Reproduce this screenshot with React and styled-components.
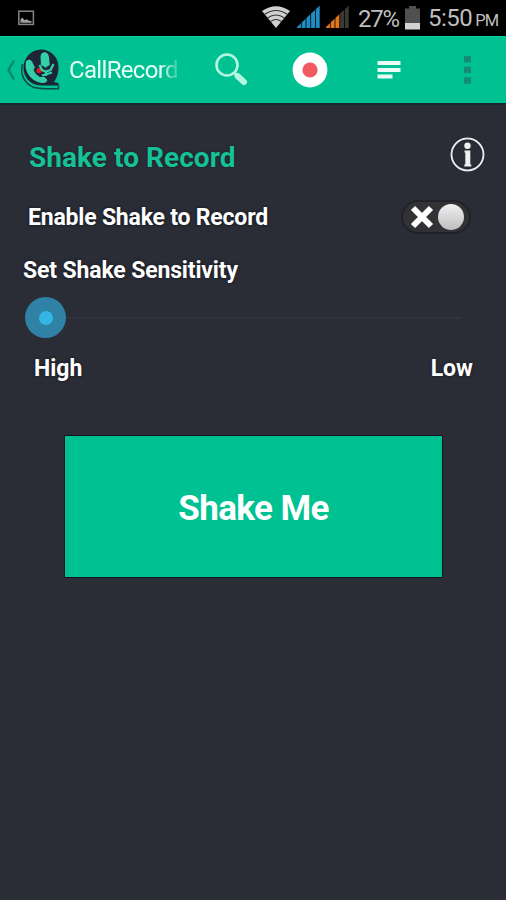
import React, { useState } from 'react';
import styled, { createGlobalStyle } from 'styled-components';

const GlobalStyle = createGlobalStyle`
  * { box-sizing: border-box; }
  body {
    margin: 0;
    background: #2a2d36;
    font-family: Roboto, "Liberation Sans", sans-serif;
  }
  button { font-family: inherit; border: 0; padding: 0; background: none; cursor: pointer; }
  svg { display: block; flex: none; }
`;

const Screen = styled.div`
  width: 506px;
  height: 900px;
  overflow: hidden;
  background: #2a2d36;
  color: #fff;
`;
const StatusBar = styled.div`
  height: 36px;
  display: flex;
  align-items: center;
  padding: 0 8px 0 17px;
  background: #000;
  color: #bebebe;
`;
const StatusIcons = styled.div`
  margin-left: auto;
  display: flex;
  align-items: center;
`;
const Signals = styled.div`
  display: flex;
  gap: 5px;
  padding: 0 0 3px 7px;
`;
const Percent = styled.span`
  width: 55px;
  padding: 2px 0 0 8px;
  font-size: 24px;
  line-height: 34px;
  letter-spacing: -1.3px;
  white-space: nowrap;
`;
const Clock = styled.span`
  width: 78px;
  padding: 2px 0 0 8px;
  font-size: 24px;
  line-height: 34px;
  letter-spacing: -0.5px;
  white-space: nowrap;
`;
const Meridiem = styled.small`
  margin-left: 3px;
  font-size: 16.5px;
  letter-spacing: -0.9px;
`;
const ActionBar = styled.header`
  height: 69px;
  display: flex;
  align-items: center;
  background: #00c191;
  border-top: 1px solid #10cf9f;
  border-bottom: 2px solid #16282f;
`;
const UpButton = styled.button`
  display: flex;
  align-items: center;
  padding-left: 5px;
`;
const AppTitle = styled.h1`
  width: 111px;
  margin: 0 0 0 9px;
  font-size: 24px;
  font-weight: 400;
  line-height: 32px;
  letter-spacing: -0.68px;
  white-space: nowrap;
  color: #e6fff8;
  mask-image: linear-gradient(to right, #000 84%, rgba(0, 0, 0, 0.2) 100%);
`;
const Actions = styled.nav`
  flex: 1;
  display: flex;
  padding-left: 14px;
`;
const Action = styled.button`
  width: 79px;
  height: 66px;
  display: grid;
  place-items: center;
`;
const Content = styled.main`
  padding: 27px 20px 0 23px;
`;
const Row = styled.div`
  display: flex;
  align-items: center;
  justify-content: space-between;
  height: ${props => props.$height}px;
  padding: ${props => props.$padding || '0'};
`;
const Heading = styled.h2`
  margin: 0;
  font-size: 28px;
  font-weight: 700;
  letter-spacing: 0.05px;
  color: #14c296;
  text-shadow: 0 0 2px #1a1626;
`;
const InfoButton = styled.button`
  padding-bottom: 5px;
`;
const Label = styled.span`
  font-size: 23px;
  font-weight: 700;
  letter-spacing: ${props => props.$spacing || 0}px;
  white-space: nowrap;
  text-shadow: 0 0 3px #101018;
`;
const Switch = styled.button`
  width: 70px;
  height: 34px;
  display: flex;
  align-items: center;
  justify-content: space-between;
  flex-direction: ${props => (props.$on ? 'row-reverse' : 'row')};
  padding: 0 5px 0 7px;
  border: 2px solid #20222a;
  border-radius: 17px;
  background: #323236;
`;
const Knob = styled.span`
  width: 26px;
  height: 26px;
  border-radius: 50%;
  background: linear-gradient(#f0f0f0, #bdbdbd);
`;
const Slider = styled.div`
  display: flex;
  align-items: center;
  height: 56px;
  padding: 1px 25px 0 2px;
`;
const Thumb = styled.div`
  width: 41px;
  height: 41px;
  display: grid;
  place-items: center;
  border-radius: 50%;
  background: #2f81a5;
  &::after {
    content: '';
    width: 14px;
    height: 14px;
    border-radius: 50%;
    background: #33b5e5;
  }
`;
const Track = styled.div`
  flex: 1;
  height: 2px;
  background: #31343d;
`;
const ShakeButton = styled.button`
  display: block;
  width: 377px;
  height: 141px;
  margin: 44px 0 0 42px;
  padding: 3px 0 0;
  background: #00c191;
  box-shadow: 0 0 0 1px #171426;
  color: #fff;
  font-size: 35px;
  font-weight: 700;
  letter-spacing: -0.6px;
`;

const ScreenshotIcon = () => (
  <svg width="18" height="16" viewBox="0 0 18 16">
    <rect x="1.8" y="1.2" width="14.6" height="13.2" fill="none" stroke="#858585" strokeWidth="1.5" />
    <path d="M3.5 12.8V9l2-1.2 2 2.4 2-.9 2 1.2 3 .8v1.5z" fill="#a0a0a0" />
  </svg>
);

const WifiIcon = () => (
  <svg width="28" height="24" viewBox="0 0 28 24">
    <path d="M0 5Q14-4.500 28 5L14 22Z" fill="#d0d0d0" />
    <g fill="none" stroke="#333" strokeWidth="1.1">
      <path d="M2.500 8.500Q14 .5 25.500 8.500M5.500 12Q14 6 22.500 12M8.500 15.500Q14 11.500 19.500 15.500" />
    </g>
  </svg>
);

const SignalIcon = ({ bars, color }) => (
  <svg width="24" height="23" viewBox="0 0 24 23">
    {[0, 1, 2, 3, 4].map(i => {
      const x = i * 4.7;
      return (
        <path
          key={i}
          d={`M${x} 23V${22 - x * 0.95}L${x + 3.9} ${22 - (x + 3.9) * 0.95}V23z`}
          fill={i < bars ? color : '#3b3936'}
        />
      );
    })}
  </svg>
);

const BatteryIcon = () => (
  <svg width="15" height="24" viewBox="0 0 15 24">
    <path d="M4 0h7v2.500h4V17H0V2.500h4z" fill="#505050" />
    <path d="M0 17h15v6.500H0z" fill="#d2d2d2" />
  </svg>
);

const BackIcon = () => (
  <svg width="15" height="24" viewBox="0 0 15 24">
    <path d="M9 2.500L3.500 12 9 21.500" fill="none" stroke="#09876c" strokeWidth="2.400" />
  </svg>
);

const LogoIcon = () => (
  <svg width="40" height="44" viewBox="0 0 40 44">
    {/* bubble with a double rim on its lower side */}
    <path d="M2.500 16C0 26 3.500 35 14 39.500q5 1.500 24.500 1.300v-3.500" fill="none" stroke="#0a4a46" strokeWidth="1.500" />
    <path d="M21 1.500c10 0 17.500 8 17.500 17.500 0 6-1.500 11-4.500 15l4.500 1v2.500H21C10 37.500 3.500 29 3.500 19.500S11 1.500 21 1.500z" fill="#1d2638" />
    {/* handset */}
    <path d="M6 13.500c1.500-2.500 4.500-2.500 6 0l2.500 5c1 2-1.500 2.500-.5 4.500 1.500 3 3 4.500 6 6 1.500.5 3-1 4.500 0l2.500 2.500c1 2-1.500 3.500-4.500 3.500C12 34 3.500 24 6 13.500z" fill="#34cfa6" />
    <circle cx="19" cy="22.500" r="2.600" fill="#dc1820" />
    {/* microphone */}
    <path d="M20.500 9c0-6.500 8-6.500 8.500 0l.8 8-4.300 3-4.500-3z" fill="#34cfa6" />
    <path d="M19.500 17l2.500 5 3.500 1.500 5-1.500 3-6M26 24v4M22 27.500l10-3" fill="none" stroke="#34cfa6" strokeWidth="2.300" />
    <path d="M22.500 18l3 2 4-2.500" fill="none" stroke="#1d4a4c" strokeWidth="1" />
  </svg>
);

const SearchIcon = () => (
  <svg width="34" height="34" viewBox="0 0 34 34">
    <circle cx="13" cy="12" r="10.500" fill="none" stroke="#b4f7e2" strokeWidth="2.600" />
    <path d="M20 19.500l3.500 3.500" stroke="#b4f7e2" strokeWidth="3" />
    <path d="M23.500 23l6.500 6" stroke="#b4f7e2" strokeWidth="6" strokeLinecap="round" />
  </svg>
);

const RecordIcon = () => (
  <svg width="36" height="36" viewBox="0 0 36 36">
    <circle cx="18" cy="18" r="17.400" fill="#fff" />
    <circle cx="18" cy="18" r="7.600" fill="#f05a60" />
  </svg>
);

const ListIcon = () => (
  <svg width="24" height="20" viewBox="0 0 24 20">
    <path d="M.5 1h23v4H.5zM.5 8h23v4H.5zM.5 14.500h15v4H.5z" fill="#e9fcf7" />
  </svg>
);

const MoreIcon = () => (
  <svg width="8" height="30" viewBox="0 0 8 30">
    <path d="M0 1h7v6.500H0zM0 11.700h7v6.500H0zM0 22.300h7v6.500H0z" fill="#178c74" />
  </svg>
);

const InfoIcon = () => (
  <svg width="36" height="36" viewBox="0 0 36 36">
    <circle cx="17.500" cy="17.500" r="16" fill="none" stroke="#171821" strokeWidth="3.500" />
    <circle cx="17.500" cy="17.500" r="16" fill="none" stroke="#e6e7ec" strokeWidth="2" />
    <circle cx="17.500" cy="8.800" r="3.200" fill="#f0f0f3" />
    <path d="M14.500 13.500h5.800v14h1v2h-7v-2h1v-12h-.8z" fill="#f0f0f3" />
  </svg>
);

const CrossIcon = () => (
  <svg width="24" height="24" viewBox="0 0 24 24">
    <path d="M3 3l18 18M21 3L3 21" stroke="#fff" strokeWidth="6" />
  </svg>
);

const App = () => {
  const [enabled, setEnabled] = useState(false);

  return (
    <>
      <GlobalStyle />
      <Screen>
        <StatusBar>
          <ScreenshotIcon />
          <StatusIcons>
            <WifiIcon />
            <Signals>
              <SignalIcon bars={5} color="#1f8cc4" />
              <SignalIcon bars={3} color="#e3761a" />
            </Signals>
            <Percent>27%</Percent>
            <BatteryIcon />
            <Clock>5:50<Meridiem>PM</Meridiem></Clock>
          </StatusIcons>
        </StatusBar>
        <ActionBar>
          <UpButton aria-label="Back">
            <BackIcon />
            <LogoIcon />
          </UpButton>
          <AppTitle>CallRecord</AppTitle>
          <Actions>
            <Action aria-label="Search"><SearchIcon /></Action>
            <Action aria-label="Record"><RecordIcon /></Action>
            <Action aria-label="List"><ListIcon /></Action>
            <Action aria-label="More"><MoreIcon /></Action>
          </Actions>
        </ActionBar>
        <Content>
          <Row $height={50} $padding="0 0 0 6px">
            <Heading>Shake to Record</Heading>
            <InfoButton aria-label="Info"><InfoIcon /></InfoButton>
          </Row>
          <Row $height={70} $padding="0 15px 0 5px">
            <Label $spacing={-0.2}>Enable Shake to Record</Label>
            <Switch $on={enabled} onClick={() => setEnabled(!enabled)} aria-label="Enable Shake to Record">
              <CrossIcon />
              <Knob />
            </Switch>
          </Row>
          <Row $height={37}>
            <Label $spacing={-0.15}>Set Shake Sensitivity</Label>
          </Row>
          <Slider>
            <Thumb />
            <Track />
          </Slider>
          <Row $height={47} $padding="0 13px 0 11px">
            <Label>High</Label>
            <Label>Low</Label>
          </Row>
          <ShakeButton>Shake Me</ShakeButton>
        </Content>
      </Screen>
    </>
  );
};

export default App;
